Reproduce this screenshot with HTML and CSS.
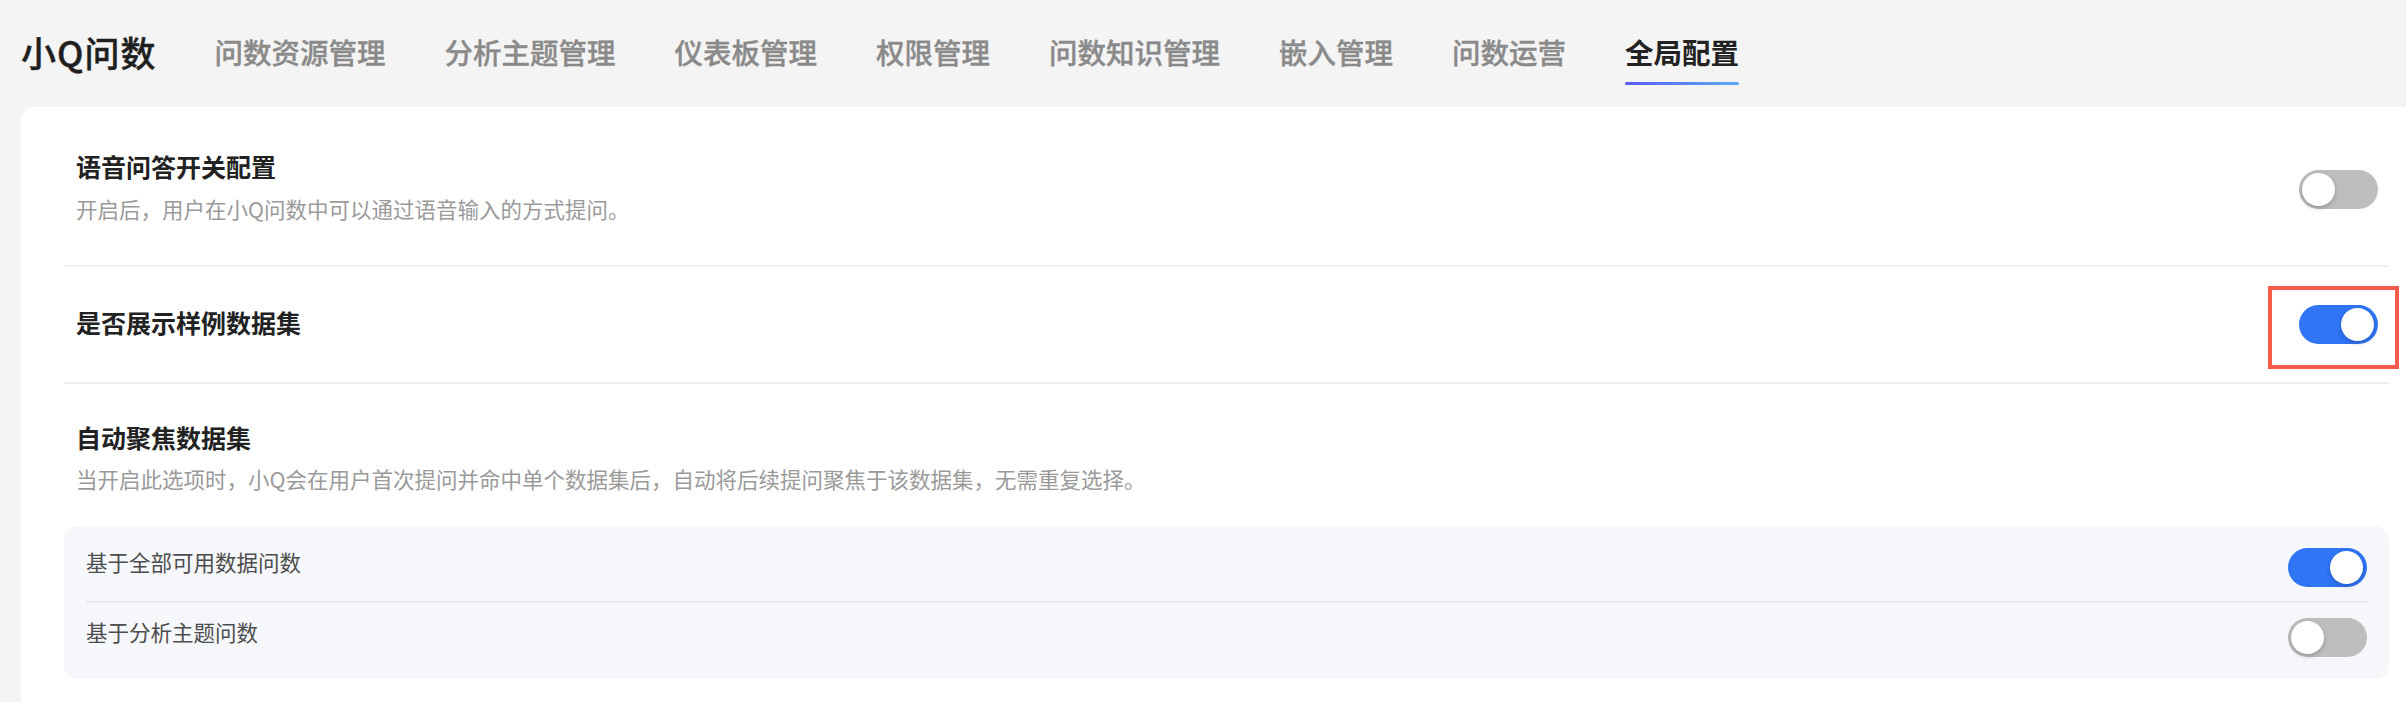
FILE: index.html
```html
<!DOCTYPE html>
<html lang="zh-CN">
<head>
<meta charset="utf-8">
<title>全局配置</title>
<link rel="stylesheet" href="styles.css">
</head>
<body>
<header class="topbar">
  <div class="logo">小Q问数</div>
  <nav class="tabs">
    <a class="tab">问数资源管理</a>
    <a class="tab">分析主题管理</a>
    <a class="tab">仪表板管理</a>
    <a class="tab">权限管理</a>
    <a class="tab">问数知识管理</a>
    <a class="tab">嵌入管理</a>
    <a class="tab">问数运营</a>
    <a class="tab active">全局配置</a>
  </nav>
</header>
<main class="card">
  <section class="row">
    <div class="info">
      <div class="title">语音问答开关配置</div>
      <div class="desc">开启后，用户在小Q问数中可以通过语音输入的方式提问。</div>
    </div>
    <span class="switch"><span class="knob"></span></span>
  </section>
  <section class="row">
    <div class="info">
      <div class="title">是否展示样例数据集</div>
    </div>
    <span class="highlight-wrap">
      <span class="switch on"><span class="knob"></span></span>
      <span class="highlight"></span>
    </span>
  </section>
  <section class="group">
    <div class="info group-head">
      <div class="title">自动聚焦数据集</div>
      <div class="desc">当开启此选项时，小Q会在用户首次提问并命中单个数据集后，自动将后续提问聚焦于该数据集，无需重复选择。</div>
    </div>
    <div class="panel">
      <div class="panel-row">
        <span class="label">基于全部可用数据问数</span>
        <span class="switch on"><span class="knob"></span></span>
      </div>
      <div class="panel-row">
        <span class="label">基于分析主题问数</span>
        <span class="switch"><span class="knob"></span></span>
      </div>
    </div>
  </section>
</main>
</body>
</html>
```

FILE: styles.css
```css
* { box-sizing: border-box; }
html, body {
  margin: 0;
  padding: 0;
  height: 100%;
  overflow: hidden;
  background: #f4f4f4;
  font-family: "Noto Sans CJK SC", "Noto Sans", sans-serif;
}
.topbar {
  display: flex;
  align-items: flex-start;
  height: 107px;
  padding: 32px 0 0 21px;
  gap: 58px;
}
.logo {
  font-size: 35px;
  line-height: 40px;
  font-weight: 500;
  color: #1f1f1f;
  letter-spacing: 1px;
  -webkit-text-stroke: 0.4px #1f1f1f;
}
.tabs {
  display: flex;
  gap: 59px;
}
.tab {
  display: flex;
  flex-direction: column;
  font-size: 28.5px;
  line-height: 40px;
  color: #8a8a8a;
  font-weight: 500;
  white-space: nowrap;
  -webkit-text-stroke: 0.35px #8a8a8a;
}
.tab.active {
  color: #222;
  font-weight: 700;
  -webkit-text-stroke: 0;
}
.tab.active::after {
  content: "";
  display: block;
  height: 3px;
  margin-top: 10px;
  border-radius: 2px;
  background: linear-gradient(90deg, #5b5cf6, #5aabf8);
}
.card {
  background: #fff;
  margin: 0 -26px 0 21px;
  border-radius: 14px 14px 0 0;
  padding: 6px 43px 0 43px;
  min-height: 600px;
}
.row {
  display: flex;
  align-items: center;
  justify-content: space-between;
  padding: 38px 11px 38px 12px;
  border-bottom: 2px solid #efefef;
}
.row .info {
  margin: -3px 0 3px;
}
.info {
  display: flex;
  flex-direction: column;
  gap: 10px;
}
.title {
  font-size: 25px;
  line-height: 36px;
  font-weight: 700;
  color: #222;
}
.desc {
  font-size: 21.5px;
  line-height: 30px;
  color: #9a9a9a;
}
.group-head {
  padding: 35px 11px 0 12px;
  gap: 9px;
}
.panel {
  margin-top: 32px;
  background: #f6f7fa;
  border-radius: 14px;
  padding: 7px 22px 8px 22px;
}
.panel-row {
  display: flex;
  align-items: center;
  justify-content: space-between;
  height: 68px;
}
.panel-row + .panel-row {
  border-top: 2px solid #e7e8ec;
  height: 70px;
}
.label {
  font-size: 21.5px;
  line-height: 30px;
  color: #4d4d4d;
  padding-bottom: 10px;
}
.switch {
  position: relative;
  display: block;
  width: 79px;
  height: 39px;
  border-radius: 20px;
  background: #bebebe;
  flex: none;
}
.switch.on {
  background: #2f75f6;
}
.knob {
  position: absolute;
  top: 3px;
  left: 3px;
  width: 33px;
  height: 33px;
  border-radius: 50%;
  background: #fff;
  box-shadow: 0 2px 5px rgba(0, 0, 0, 0.22);
}
.switch.on .knob {
  left: auto;
  right: 4px;
}
.highlight-wrap {
  position: relative;
  display: block;
}
.highlight {
  position: absolute;
  left: -31px;
  right: -21px;
  top: -19px;
  bottom: -25px;
  border: 4px solid #f55a4b;
}
```
